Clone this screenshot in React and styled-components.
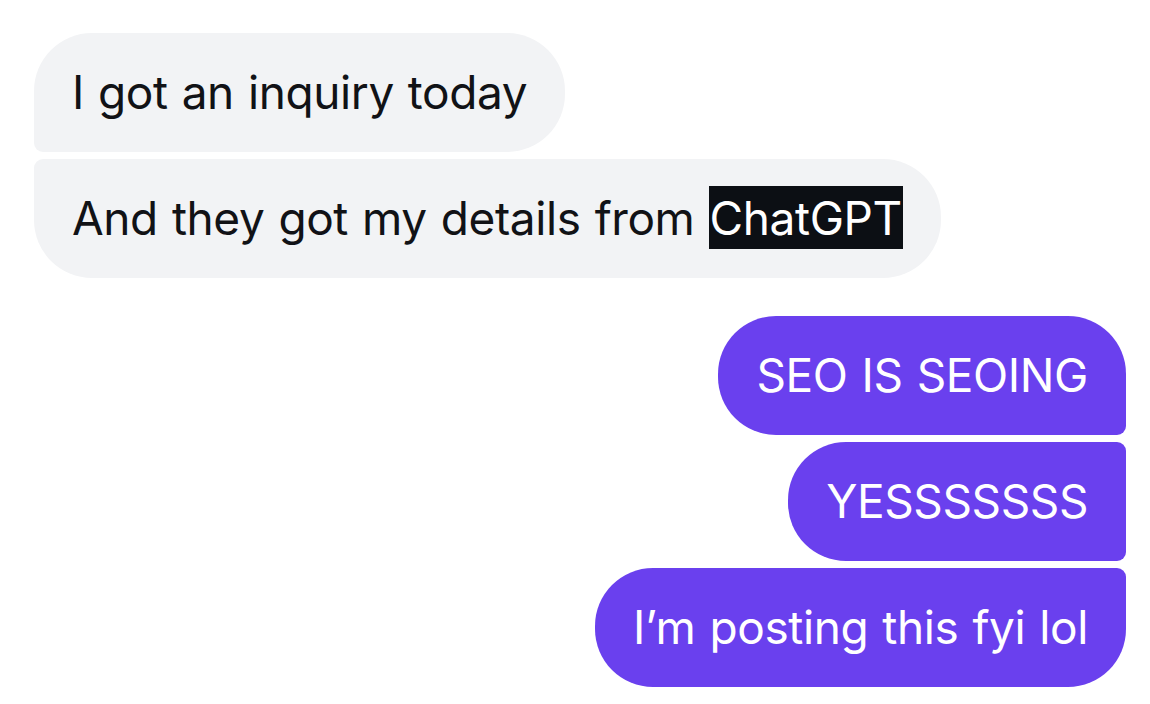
import React from 'react'
import styled, { createGlobalStyle } from 'styled-components'

const GlobalStyle = createGlobalStyle`
  html, body {
    margin: 0;
    padding: 0;
    background: #ffffff;
  }
  body {
    font-family: Inter, "Liberation Sans", sans-serif;
  }
`

const messages = [
  { from: 'them', parts: ['I got an inquiry today'] },
  { from: 'them', parts: ['And they got my details from ', { mark: 'ChatGPT' }] },
  { from: 'me', parts: ['SEO IS SEOING'] },
  { from: 'me', parts: ['YESSSSSSS'] },
  { from: 'me', parts: ['I\u2019m posting this fyi lol'] },
]

// groups consecutive messages from the same sender
const groupMessages = (list) => {
  const groups = []
  list.forEach((m) => {
    const last = groups[groups.length - 1]
    if (last && last.from === m.from) last.items.push(m)
    else groups.push({ from: m.from, items: [m] })
  })
  return groups
}

const BIG = '58px'
const SMALL = '9px'

const cornerRadius = (mine, pos) => {
  const first = pos === 'first' || pos === 'only'
  const last = pos === 'last' || pos === 'only'
  if (mine) {
    return `${BIG} ${first ? BIG : SMALL} ${last ? BIG : SMALL} ${BIG}`
  }
  return `${first ? BIG : SMALL} ${BIG} ${BIG} ${last ? BIG : SMALL}`
}

const App = () => {
  const groups = groupMessages(messages)
  return (
    <>
      <GlobalStyle />
      <Thread>
        {groups.map((g, gi) => (
          <Group key={gi} $mine={g.from === 'me'}>
            {g.items.map((m, i) => {
              const n = g.items.length
              const pos = n === 1 ? 'only' : i === 0 ? 'first' : i === n - 1 ? 'last' : 'middle'
              return (
                <Bubble key={i} $mine={g.from === 'me'} $pos={pos}>
                  {m.parts.map((p, pi) =>
                    typeof p === 'string' ? <span key={pi}>{p}</span> : <Highlight key={pi}>{p.mark}</Highlight>
                  )}
                </Bubble>
              )
            })}
          </Group>
        ))}
      </Thread>
    </>
  )
}

const Thread = styled.div`
  display: flex;
  flex-direction: column;
  gap: 38px;
  padding: 33px 24px 0 34px;
`

const Group = styled.div`
  display: flex;
  flex-direction: column;
  align-items: ${(p) => (p.$mine ? 'flex-end' : 'flex-start')};
  gap: 7px;
`

const Bubble = styled.div`
  display: flex;
  align-items: center;
  height: 119px;
  box-sizing: border-box;
  padding: 0 38px 2px;
  white-space: pre;
  font-size: 46px;
  letter-spacing: -0.4px;
  word-spacing: 1.5px;
  color: ${(p) => (p.$mine ? '#ffffff' : '#111216')};
  background: ${(p) => (p.$mine ? '#6a40ee' : '#f2f3f5')};
  border-radius: ${(p) => cornerRadius(p.$mine, p.$pos)};
`

const Highlight = styled.span`
  background: #0c0f14;
  color: #ffffff;
  padding: 4px 1px 3px;
`

export default App
